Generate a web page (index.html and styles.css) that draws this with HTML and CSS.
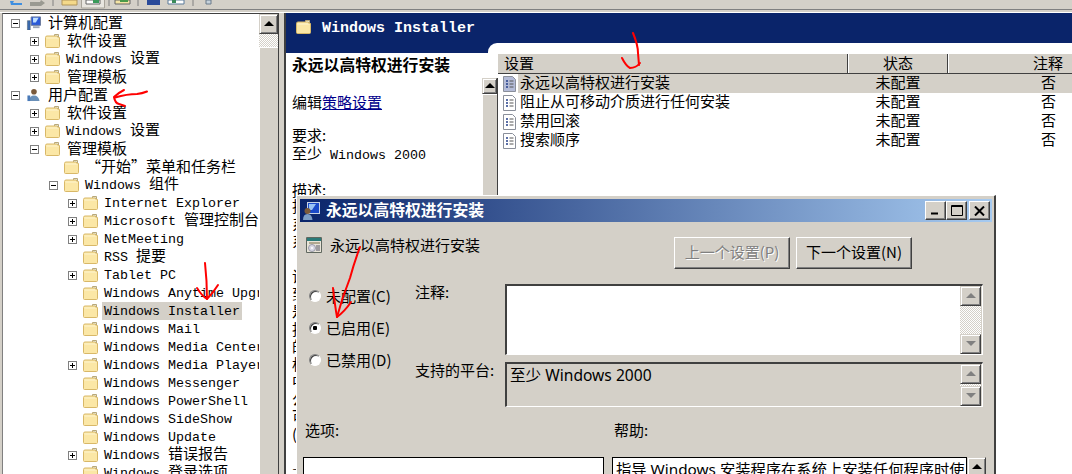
FILE: index.html
```html
<!DOCTYPE html>
<html lang="zh-CN">

<head>
    <meta charset="UTF-8">
    <title>组策略编辑器</title>
    <link rel="stylesheet" href="styles.css">
</head>

<body>
    <svg class="sprite">
        <symbol id="folder" viewBox="0 0 15 14">
            <path d="M9.5 .5h4v3h-4z" fill="#e4eef2" stroke="#b9a878" />
            <path d="M.5 3.5q0-1.500 1.500-1.500h10.500v1.500h2v9q0 1-1 1h-12q-1 0-1-1z" fill="#fbe7a6" stroke="#d8b868" />
            <path d="M1.500 4h12" stroke="#fdf4cf" />
        </symbol>
        <symbol id="doc" viewBox="0 0 13 16">
            <path d="M.5 .5h9l3 3v12h-12z" fill="var(--page, #fff)" stroke="#8a8f9a" />
            <path d="M3 5h2M3 8h2M3 11h2" stroke="#26408a" stroke-width="1.500" />
            <path d="M6.500 5h4M6.500 8h4M6.500 11h4" stroke="#555" />
        </symbol>
    </svg>

    <div class="toolbar">
        <svg width="240" height="9" viewBox="0 0 240 9">
            <path d="M10 1h4l-1 2h9v2h-11z" fill="#3f8fe0" />
            <path d="M30 2h10l1-2 4 3-4 3h-11z" fill="#9a9a92" />
            <path d="M53 0v6M109 0v6M138 0v6M193 0v6" stroke="#808080" />
            <path d="M62 0h15v5h-15z" fill="#f4d98a" stroke="#b0945a" />
            <path d="M81.500 0v8h23v-8" fill="#e8e6e0" stroke="#a8a49a" />
            <path d="M86 0h14v4h-14z" fill="#fff" stroke="#666" />
            <path d="M93 0h6v3h-6z" fill="#3a9a5a" />
            <path d="M115 0h15v4h-15z" fill="#f4e4a4" stroke="#666" />
            <path d="M120 0h8v2h-8z" fill="#4a9a4a" />
            <path d="M147 0h13v5h-13z" fill="#2a4a9a" />
            <path d="M168 0h16v4h-16z" fill="#fff" stroke="#5a7a9a" />
            <path d="M172 0h4v3h-4z" fill="#3a8a5a" />
            <path d="M206 0h5v4h-5z" fill="#c6d2dc" stroke="#6a7a8a" />
        </svg>
    </div>
    <div class="toolbar-rule"></div>

    <div class="main">
        <div class="tree-pane">
            <div class="tree">
                <div class="row lv0"><span class="exp minus"></span>
                    <svg class="node-icon" viewBox="0 0 15 15">
                        <path d="M5 1h10v9h-10z" fill="#2a5ad8" stroke="#6a7a9a" />
                        <path d="M7 2h6l-3 5h-3z" fill="#bfe0ff" />
                        <path d="M7 11h7v2h-7z" fill="#9aa4b4" />
                        <path d="M1 5h3v10h-3z" fill="#3a6ab0" stroke="#456" stroke-width=".5" />
                    </svg>
                    <span class="lb zh">计算机配置</span></div>
                <div class="row lv1"><span class="exp plus"></span><svg class="node-icon"><use href="#folder" /></svg><span class="lb zh">软件设置</span></div>
                <div class="row lv1"><span class="exp plus"></span><svg class="node-icon"><use href="#folder" /></svg><span class="lb">Windows <span class="zh">设置</span></span></div>
                <div class="row lv1"><span class="exp plus"></span><svg class="node-icon"><use href="#folder" /></svg><span class="lb zh">管理模板</span></div>
                <div class="row lv0"><span class="exp minus"></span>
                    <svg class="node-icon" viewBox="0 0 15 15">
                        <circle cx="8" cy="4" r="3" fill="#7a5a3a" />
                        <path d="M3 14q0-6 5-6t6 6z" fill="#6a90b8" />
                        <path d="M1 8h3v6h-3z" fill="#4a7ab8" />
                    </svg>
                    <span class="lb zh">用户配置</span></div>
                <div class="row lv1"><span class="exp plus"></span><svg class="node-icon"><use href="#folder" /></svg><span class="lb zh">软件设置</span></div>
                <div class="row lv1"><span class="exp plus"></span><svg class="node-icon"><use href="#folder" /></svg><span class="lb">Windows <span class="zh">设置</span></span></div>
                <div class="row lv1"><span class="exp minus"></span><svg class="node-icon"><use href="#folder" /></svg><span class="lb zh">管理模板</span></div>
                <div class="row lv2"><span class="exp none"></span><svg class="node-icon"><use href="#folder" /></svg><span class="lb zh">“开始”菜单和任务栏</span></div>
                <div class="row lv2"><span class="exp minus"></span><svg class="node-icon"><use href="#folder" /></svg><span class="lb">Windows <span class="zh">组件</span></span></div>
                <div class="row lv3"><span class="exp plus"></span><svg class="node-icon"><use href="#folder" /></svg><span class="lb">Internet Explorer</span></div>
                <div class="row lv3"><span class="exp plus"></span><svg class="node-icon"><use href="#folder" /></svg><span class="lb">Microsoft <span class="zh">管理控制台</span></span></div>
                <div class="row lv3"><span class="exp plus"></span><svg class="node-icon"><use href="#folder" /></svg><span class="lb">NetMeeting</span></div>
                <div class="row lv3"><span class="exp none"></span><svg class="node-icon"><use href="#folder" /></svg><span class="lb">RSS <span class="zh">提要</span></span></div>
                <div class="row lv3"><span class="exp plus"></span><svg class="node-icon"><use href="#folder" /></svg><span class="lb">Tablet PC</span></div>
                <div class="row lv3"><span class="exp none"></span><svg class="node-icon"><use href="#folder" /></svg><span class="lb">Windows Anytime Upgrade</span></div>
                <div class="row lv3"><span class="exp none"></span><svg class="node-icon"><use href="#folder" /></svg><span class="lb selected">Windows Installer</span></div>
                <div class="row lv3"><span class="exp none"></span><svg class="node-icon"><use href="#folder" /></svg><span class="lb">Windows Mail</span></div>
                <div class="row lv3"><span class="exp none"></span><svg class="node-icon"><use href="#folder" /></svg><span class="lb">Windows Media Center</span></div>
                <div class="row lv3"><span class="exp plus"></span><svg class="node-icon"><use href="#folder" /></svg><span class="lb">Windows Media Player</span></div>
                <div class="row lv3"><span class="exp none"></span><svg class="node-icon"><use href="#folder" /></svg><span class="lb">Windows Messenger</span></div>
                <div class="row lv3"><span class="exp none"></span><svg class="node-icon"><use href="#folder" /></svg><span class="lb">Windows PowerShell</span></div>
                <div class="row lv3"><span class="exp none"></span><svg class="node-icon"><use href="#folder" /></svg><span class="lb">Windows SideShow</span></div>
                <div class="row lv3"><span class="exp none"></span><svg class="node-icon"><use href="#folder" /></svg><span class="lb">Windows Update</span></div>
                <div class="row lv3"><span class="exp plus"></span><svg class="node-icon"><use href="#folder" /></svg><span class="lb">Windows <span class="zh">错误报告</span></span></div>
                <div class="row lv3"><span class="exp none"></span><svg class="node-icon"><use href="#folder" /></svg><span class="lb">Windows <span class="zh">登录选项</span></span></div>
            </div>
            <div class="sb tree-sb">
                <div class="sb-btn up"></div>
                <div class="sb-track"></div>
                <div class="sb-thumb"></div>
            </div>
        </div>

        <div class="right-pane">
            <div class="head">
                <svg class="node-icon"><use href="#folder" /></svg>
                <span class="head-title">Windows Installer</span>
            </div>
            <div class="content">
                <div class="desc">
                    <div class="desc-text">
                        <p class="d-title">永远以高特权进行安装</p>
                        <p class="d-edit">编辑<a href="#">策略设置</a></p>
                        <p class="d-need">要求:</p>
                        <p class="d-win">至少<span class="en"> Windows 2000</span></p>
                        <p class="d-label">描述:</p>
                        <p class="d-help">指导 Windows 安装程序
系统上安装任何程序时
系统权限。

设置启用后，特权将扩
到所有程序。这些特权
是保留给已分配给用户
指派给计算机的程序。
的程序在安装时可以
标记为受信任的程序，
中的任意目录都可写，
公共文件也可以替换，
可以修改注册表项。
(此设置不影响用户)

—
并非所有情况都适用</p>
                    </div>
                    <div class="sb desc-sb">
                        <div class="sb-btn up"></div>
                        <div class="sb-thumb"></div>
                    </div>
                </div>
                <div class="list">
                    <div class="list-head">
                        <div class="col-name">设置</div>
                        <div class="col-state">状态</div>
                        <div class="col-note">注释</div>
                    </div>
                    <div class="list-row selected">
                        <svg class="doc-icon"><use href="#doc" /></svg>
                        <div class="col-name">永远以高特权进行安装</div>
                        <div class="col-state">未配置</div>
                        <div class="col-note">否</div>
                    </div>
                    <div class="list-row">
                        <svg class="doc-icon"><use href="#doc" /></svg>
                        <div class="col-name">阻止从可移动介质进行任何安装</div>
                        <div class="col-state">未配置</div>
                        <div class="col-note">否</div>
                    </div>
                    <div class="list-row">
                        <svg class="doc-icon"><use href="#doc" /></svg>
                        <div class="col-name">禁用回滚</div>
                        <div class="col-state">未配置</div>
                        <div class="col-note">否</div>
                    </div>
                    <div class="list-row">
                        <svg class="doc-icon"><use href="#doc" /></svg>
                        <div class="col-name">搜索顺序</div>
                        <div class="col-state">未配置</div>
                        <div class="col-note">否</div>
                    </div>
                </div>
            </div>
        </div>
    </div>

    <div class="dialog">
        <div class="title">
            <svg class="title-icon" viewBox="0 0 18 18">
                <path d="M4 0h13v12h-13z" fill="#c8d4e4" />
                <path d="M5 1h11v10h-11z" fill="#1a4ac8" />
                <path d="M6 2h7l-4 6h-3z" fill="#9ac4f4" />
                <circle cx="4.500" cy="9" r="3" fill="#7a5a3a" />
                <path d="M0 18q0-6 4.500-6t5 6z" fill="#7a9cc4" />
            </svg>
            <span class="title-text">永远以高特权进行安装</span>
            <div class="win-btns">
                <button class="win-btn"><svg width="9" height="9" viewBox="0 0 9 9"><path d="M0 7.500h7" stroke="#000" stroke-width="2" /></svg></button>
                <button class="win-btn"><svg width="12" height="11" viewBox="0 0 12 11"><path d="M.5 .5h11v10h-11zM.5 1.500h11" fill="none" stroke="#000" /></svg></button>
                <button class="win-btn close"><svg width="11" height="10" viewBox="0 0 11 10"><path d="M1 .5l9 9M10 .5l-9 9" stroke="#000" stroke-width="2" /></svg></button>
            </div>
        </div>

        <div class="dlg-top">
            <div class="dlg-heading">
                <svg class="heading-icon" viewBox="0 0 16 16">
                    <path d="M.5 .5h15v15h-15z" fill="#e8e4d8" stroke="#606860" />
                    <path d="M1 1h14v3h-14z" fill="#2a7a78" />
                    <path d="M3 5h11v2h-11z" fill="#b0a890" />
                    <circle cx="6" cy="11" r="3.500" fill="#d8d8e4" stroke="#9a9aa8" />
                    <circle cx="6" cy="11" r="1" fill="#fff" />
                    <path d="M10 9h4M10 11h4M10 13h4" stroke="#556" />
                </svg>
                <span class="heading-text">永远以高特权进行安装</span>
            </div>
            <div class="dlg-nav">
                <button class="btn" disabled>上一个设置(P)</button>
                <button class="btn">下一个设置(N)</button>
            </div>
        </div>

        <div class="dlg-mid">
            <div class="radios">
                <label class="radio-row"><input type="radio" name="state">未配置(C)</label>
                <label class="radio-row"><input type="radio" name="state" checked>已启用(E)</label>
                <label class="radio-row"><input type="radio" name="state">已禁用(D)</label>
            </div>
            <div class="fields">
                <div class="f-label">注释:</div>
                <div class="f-box note-box">
                    <div class="f-value"></div>
                    <div class="sb small-sb">
                        <div class="sb-btn up off"></div>
                        <div class="sb-track"></div>
                        <div class="sb-btn down off"></div>
                    </div>
                </div>
                <div class="f-label">支持的平台:</div>
                <div class="f-box platform-box">
                    <div class="f-value">至少 Windows 2000</div>
                    <div class="sb small-sb">
                        <div class="sb-btn up off"></div>
                        <div class="sb-track"></div>
                        <div class="sb-btn down off"></div>
                    </div>
                </div>
            </div>
        </div>

        <div class="dlg-lower">
            <div class="low-label">选项:</div>
            <div class="low-label help-label">帮助:</div>
            <div></div>
            <div class="low-box"></div>
            <div class="low-box help-box">指导 Windows 安装程序在系统上安装任何程序时使</div>
            <div class="sb help-sb">
                <div class="sb-btn up"></div>
            </div>
        </div>
    </div>

    <!-- red marks drawn on top of the screenshot -->
    <svg class="marks" width="1072" height="474" viewBox="0 0 1072 474">
        <path d="M147 91.500q-5 2-10 2.500-10 0-22 3.500" />
        <path d="M124 90q-6 3-10 7 1 6 5 7l6 2" />
        <path d="M205 263q2 18 2 36" />
        <path d="M197 288q5 8 10 11 6-6 11-14" />
        <path d="M633 33q5 12 5 20l1 12" />
        <path d="M622 58q4 8 8 10 6 0 10-5" />
        <path d="M360 247q-6 16-10 31-8 20-13 39" />
        <path d="M333 288q2 18 4 29 8-6 14-15" />
    </svg>
</body>

</html>
```

FILE: styles.css
```css
* {
    box-sizing: border-box;
}

html,
body {
    margin: 0;
    height: 474px;
    overflow: hidden;
}

body {
    position: relative;
    background: #d4d0c8;
    color: #000;
    font-family: "Noto Sans CJK SC", sans-serif;
    font-size: 15px;
}

.sprite {
    display: none;
}

.toolbar {
    height: 9px;
    overflow: hidden;
}

.toolbar svg {
    display: block;
}

.toolbar-rule {
    height: 4px;
    border-top: 1px solid #808080;
    border-bottom: 1px solid #fff;
    background: #d4d0c8;
}

.main {
    display: flex;
    height: 461px;
}

/* tree on the left */
.tree-pane {
    display: flex;
    width: 277px;
    margin-left: 2px;
    background: #fff;
    border-top: 1px solid #404040;
    border-left: 1px solid #808080;
    border-right: 1px solid #404040;
}

.tree {
    width: 256px;
    overflow: hidden;
}

.row {
    display: flex;
    align-items: center;
    height: 18px;
    white-space: nowrap;
    font-family: "Liberation Mono", "Noto Sans CJK SC", monospace;
    font-size: 13.33px;
}

.lv0 {
    padding-left: 8px;
}

.lv1 {
    padding-left: 27px;
}

.lv2 {
    padding-left: 46px;
}

.lv3 {
    padding-left: 65px;
}

.exp {
    flex: none;
    width: 9px;
    height: 9px;
    margin-right: 6px;
    border: 1px solid #808080;
    background: #fff;
}

.exp.none {
    border: 0;
}

.exp.minus {
    background: linear-gradient(#000, #000) center / 5px 1px no-repeat;
}

.exp.plus {
    background:
        linear-gradient(#000, #000) center / 5px 1px no-repeat,
        linear-gradient(#000, #000) center / 1px 5px no-repeat;
}

.node-icon {
    flex: none;
    width: 15px;
    height: 14px;
}

.lb {
    margin-left: 4px;
    padding: 1px 2px 0;
    height: 18px;
    line-height: 17px;
}

.lb.zh {
    padding: 0 2px 0 3px;
    line-height: 15px;
}

.lb .zh {
    line-height: 0;
}

.lb.selected {
    background: #d4d0c8;
}

.zh {
    font-family: "Noto Sans CJK SC", sans-serif;
    font-size: 15px;
}

/* scrollbars */
.sb {
    flex: none;
    display: flex;
    flex-direction: column;
    background: #d4d0c8;
}

.sb-btn {
    position: relative;
    flex: none;
    background: #d4d0c8;
    border: 1px solid;
    border-color: #d4d0c8 #404040 #404040 #d4d0c8;
    box-shadow: inset 1px 1px #fff, inset -1px -1px #808080;
}

.sb-btn::after {
    content: "";
    position: absolute;
    left: 50%;
    top: 50%;
    margin: -3px 0 0 -5px;
    border: 5px solid transparent;
    border-top: 0;
    border-bottom: 5px solid #000;
}

.sb-btn.down::after {
    border-bottom: 0;
    border-top: 5px solid #000;
}

.sb-btn.off::after {
    border-bottom-color: #808080;
    border-top-color: #808080;
}

.sb-track {
    flex: 1;
    background: conic-gradient(#fff 25%, #d4d0c8 0 50%, #fff 0 75%, #d4d0c8 0) 0 0 / 2px 2px;
}

.sb-thumb {
    flex: 1;
    background: #d4d0c8;
    border-top: 1px solid #fff;
    border-left: 1px solid #fff;
}

.tree-sb {
    width: 19px;
}

.tree-sb .sb-btn {
    height: 20px;
}

.tree-sb .sb-track {
    flex: none;
    height: 13px;
}

/* right pane */
.right-pane {
    flex: 1;
    display: flex;
    flex-direction: column;
    margin-left: 5px;
    border-left: 2px solid #404040;
    background: #0a246a;
}

.head {
    flex: none;
    display: flex;
    align-items: center;
    height: 30px;
    padding: 0 0 2px 10px;
}

.head-title {
    margin-left: 11px;
    padding-top: 2px;
    color: #fff;
    font-family: "Liberation Mono", monospace;
    font-size: 15px;
    font-weight: bold;
}

.content {
    flex: 1;
    display: flex;
    min-height: 0;
}

.desc {
    flex: none;
    display: flex;
    width: 212px;
    margin-top: 10px;
    background: #fff;
}

.desc-text {
    flex: 1;
    overflow: hidden;
    padding: 3px 0 0 6px;
}

.desc-text p {
    margin: 0;
    line-height: 18px;
    white-space: nowrap;
}

.d-title {
    margin-bottom: 19px !important;
    font-size: 15.8px;
    font-weight: bold;
}

.d-need {
    margin-top: 15px !important;
}

.en {
    font-family: "Liberation Mono", monospace;
    font-size: 13.33px;
}

.d-label {
    margin-top: 16px !important;
}

.d-help {
    margin-top: -2px !important;
    line-height: 17.5px !important;
    white-space: pre !important;
}

.d-edit a {
    color: #00008b;
    text-decoration: underline;
}

.desc-sb {
    width: 16px;
    margin-top: 25px;
    border-right: 1px solid #404040;
}

.desc-sb .sb-btn {
    height: 16px;
}

.list {
    position: relative;
    flex: 1;
    padding-top: 11px;
    background: #fff;
}

.list::before {
    content: "";
    position: absolute;
    left: -10px;
    top: 0;
    width: 20px;
    height: 12px;
    background: #fff;
    border-radius: 9px 0 0 0;
}

.list-head {
    position: relative;
    display: flex;
    height: 20px;
    line-height: 18px;
    background: #d4d0c8;
    border-bottom: 1px solid #404040;
}

.list-head .col-name {
    width: 350px;
    padding-left: 6px;
    border-right: 1px solid #404040;
}

.list-head .col-state {
    width: 100px;
    text-align: center;
    border-left: 1px solid #fff;
    border-right: 1px solid #404040;
}

.list-head .col-note {
    flex: 1;
    padding-right: 9px;
    text-align: right;
    border-left: 1px solid #fff;
}

.list-row {
    display: flex;
    align-items: center;
    height: 19px;
    padding-left: 5px;
    line-height: 16px;
    white-space: nowrap;
}

.doc-icon {
    flex: none;
    width: 13px;
    height: 16px;
}

.list-row.selected .doc-icon {
    --page: #b4bcd8;
}

.list-row .col-name {
    width: 332px;
    height: 19px;
    margin-left: 2px;
    padding-left: 2px;
}

.list-row .col-state {
    width: 100px;
    height: 19px;
    margin-left: -2px;
    text-align: center;
}

.list-row .col-note {
    width: 120px;
    height: 19px;
    padding-left: 93px;
}

.list-row.selected .col-name,
.list-row.selected .col-state,
.list-row.selected .col-note {
    background: #d4d0c8;
}

.list-row.selected .col-note {
    flex: 1;
}

/* policy window, floats over the console */
.dialog {
    position: absolute;
    left: 296px;
    top: 195px;
    width: 700px;
    height: 279px;
    overflow: hidden;
    padding: 3px 2px 0 3px;
    background: #d4d0c8;
    border-top: 1px solid #fff;
    border-left: 1px solid #fff;
    border-right: 2px solid #404040;
}

.title {
    display: flex;
    align-items: center;
    height: 23px;
    padding: 0 2px 0 3px;
    background: linear-gradient(90deg, #0a246a, #a6caf0);
}

.title-icon {
    flex: none;
    width: 18px;
    height: 18px;
}

.title-text {
    margin-left: 5px;
    padding-bottom: 2px;
    color: #fff;
    font-size: 15.8px;
    font-weight: bold;
}

.win-btns {
    display: flex;
    margin-left: auto;
}

.win-btn {
    display: flex;
    align-items: center;
    justify-content: center;
    width: 21px;
    height: 19px;
    padding: 0;
    background: #d4d0c8;
    border: 1px solid;
    border-color: #fff #404040 #404040 #fff;
    box-shadow: inset -1px -1px #808080;
}

.win-btn.close {
    margin-left: 2px;
}

.dlg-top {
    display: flex;
    align-items: flex-start;
    justify-content: space-between;
    height: 32px;
    margin-top: 15px;
    padding: 0 80px 0 6px;
}

.dlg-heading {
    display: flex;
    align-items: center;
    height: 16px;
    line-height: 15px;
}

.heading-icon {
    width: 16px;
    height: 16px;
    margin-right: 8px;
}

.heading-text {
    padding-bottom: 2px;
}

.dlg-nav {
    display: flex;
    gap: 6px;
}

.btn {
    width: 116px;
    height: 32px;
    padding: 0 0 3px;
    font: inherit;
    color: #000;
    background: #d4d0c8;
    border: 1px solid;
    border-color: #fff #404040 #404040 #fff;
    box-shadow: inset -1px -1px #808080;
}

.btn:disabled {
    color: #808080;
    text-shadow: 1px 1px #fff;
}

.dlg-mid {
    display: flex;
    height: 123px;
    margin-top: 15px;
}

.radios {
    flex: none;
    display: flex;
    flex-direction: column;
    gap: 8px;
    width: 115px;
    padding-left: 9px;
}

.radio-row {
    display: flex;
    align-items: center;
    height: 24px;
    line-height: 22px;
    padding-bottom: 1px;
}

.radio-row input {
    appearance: none;
    width: 12px;
    height: 12px;
    margin: 0 5px 0 0;
    border: 1px solid;
    border-color: #808080 #fff #fff #808080;
    border-radius: 50%;
    background: #fff;
    box-shadow: inset 1px 1px #404040;
}

.radio-row input:checked {
    background: radial-gradient(circle, #000 0 2px, #fff 2.5px);
}

.fields {
    display: grid;
    grid-template-columns: 90px 478px;
    grid-template-rows: 71px 45px;
    row-gap: 7px;
}

.f-label {
    line-height: 15px;
}

.f-box {
    display: flex;
    border: 2px solid;
    border-color: #404040 #fff #fff #404040;
    border-width: 2px 1px 1px 2px;
}

.f-value {
    flex: 1;
    padding: 0 3px;
    font-family: "Noto Sans", "Noto Sans CJK SC", sans-serif;
    font-size: 15.6px;
    line-height: 22px;
}

.note-box .f-value {
    background: #fff;
}

.small-sb {
    width: 21px;
    margin-right: 1px;
}

.small-sb .sb-btn {
    height: 20px;
}

.dlg-lower {
    display: grid;
    grid-template-columns: 301px 363px 19px;
    grid-template-rows: 18px 40px;
    row-gap: 17px;
    margin-top: 15px;
    padding-left: 3px;
}

.low-label {
    padding-left: 2px;
    line-height: 16px;
}

.help-label {
    margin-left: 8px;
}

.low-box {
    background: #fff;
    border: 1px solid #000;
}

.help-box {
    margin-left: 8px;
    padding: 0 3px;
    overflow: hidden;
    white-space: nowrap;
    font-family: "Noto Sans", "Noto Sans CJK SC", sans-serif;
    font-size: 15.3px;
    line-height: 22px;
}

.help-sb .sb-btn {
    height: 20px;
}

.marks {
    position: absolute;
    left: 0;
    top: 0;
    pointer-events: none;
}

.marks path {
    fill: none;
    stroke: #f00;
    stroke-width: 2;
    stroke-linecap: round;
    stroke-linejoin: round;
}
```
